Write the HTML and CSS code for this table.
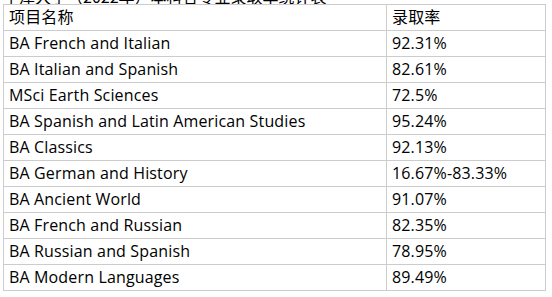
FILE: index.html
```html
<!DOCTYPE html>
<html lang="zh-CN">
<head>
<meta charset="utf-8">
<title>录取率</title>
<link rel="stylesheet" href="styles.css">
</head>
<body>
<div class="title"><span>牛津大学（2022年）本科各专业录取率统计表</span></div>
<table class="rates">
  <colgroup><col class="c-name"><col class="c-rate"></colgroup>
  <tr><td>项目名称</td><td>录取率</td></tr>
  <tr><td>BA French and Italian</td><td>92.31%</td></tr>
  <tr><td>BA Italian and Spanish</td><td>82.61%</td></tr>
  <tr><td>MSci Earth Sciences</td><td>72.5%</td></tr>
  <tr><td>BA Spanish and Latin American Studies</td><td>95.24%</td></tr>
  <tr><td>BA Classics</td><td>92.13%</td></tr>
  <tr><td>BA German and History</td><td>16.67%-83.33%</td></tr>
  <tr><td>BA Ancient World</td><td>91.07%</td></tr>
  <tr><td>BA French and Russian</td><td>82.35%</td></tr>
  <tr><td>BA Russian and Spanish</td><td>78.95%</td></tr>
  <tr><td>BA Modern Languages</td><td>89.49%</td></tr>
</table>
</body>
</html>
```
FILE: styles.css
```css
html,body{background:#fff}
body{
  margin:0;
  padding:0 7px 0 3px;
  font-family:"Open Sans","Noto Sans CJK SC",sans-serif;
  font-size:16px;
  letter-spacing:0.15px;
  color:#000;
}
.title{
  height:4px;
  overflow:hidden;
  display:flex;
  align-items:flex-end;
  white-space:nowrap;
}
.title span{
  display:block;
  line-height:16px;
  height:16px;
  flex:none;
  font-family:"Noto Sans CJK SC",sans-serif;
  letter-spacing:0;
}
.rates{
  border-collapse:collapse;
  table-layout:fixed;
  width:543px;
}
.c-name{width:383px}
.rates td{
  border:1px solid #cccccc;
  padding:0 5px;
  height:25px;
  line-height:25px;
  white-space:nowrap;
  box-sizing:border-box;
}
```
